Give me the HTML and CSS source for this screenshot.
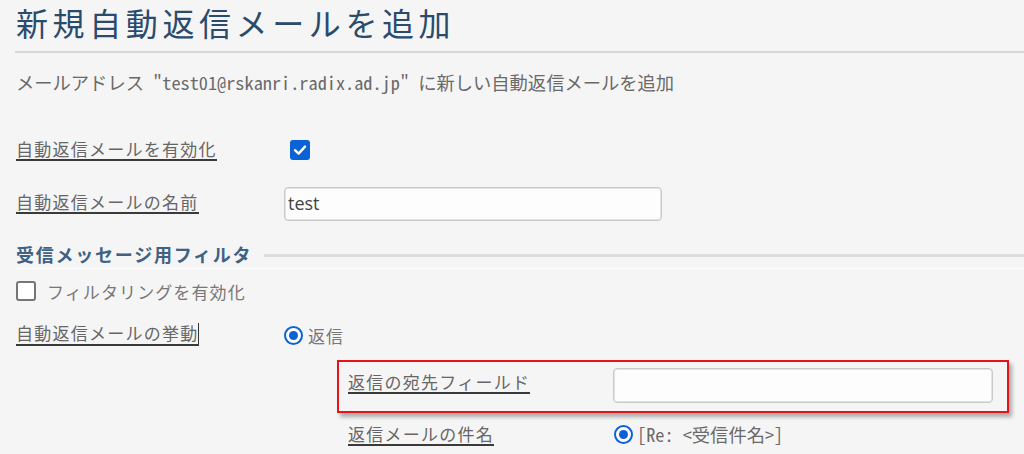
FILE: index.html
```html
<!DOCTYPE html>
<html lang="ja">
<head>
<meta charset="utf-8">
<title>新規自動返信メールを追加</title>
<link rel="stylesheet" href="styles.css">
</head>
<body>
<div class="page">
  <h1 class="title">新規自動返信メールを追加</h1>
  <div class="rule"></div>
  <p class="subtitle">メールアドレス "test01@rskanri.radix.ad.jp" に新しい自動返信メールを追加</p>

  <div class="row row-enable">
    <div class="label-col"><span class="label">自動返信メールを有効化</span></div>
    <div class="value-col">
      <span class="check checked">
        <svg viewBox="0 0 20 20" width="20" height="20"><path d="M5 10.2 L8.6 13.6 L15 6.6" fill="none" stroke="#fff" stroke-width="2.4" stroke-linecap="round" stroke-linejoin="round"/></svg>
      </span>
    </div>
  </div>

  <div class="row row-name">
    <div class="label-col"><span class="label">自動返信メールの名前</span></div>
    <div class="value-col"><div class="input input-name">test</div></div>
  </div>

  <div class="section">
    <h2 class="section-title">受信メッセージ用フィルタ</h2>
    <div class="section-line"></div>
  </div>

  <div class="row row-filter">
    <span class="check"></span>
    <span class="filter-text">フィルタリングを有効化</span>
  </div>

  <div class="row row-behavior">
    <div class="label-col"><span class="label">自動返信メールの挙動<span class="caret"></span></span></div>
    <div class="value-col">
      <span class="radio"><span class="dot"></span></span>
      <span class="radio-text">返信</span>
    </div>
  </div>

  <div class="highlight">
    <div class="sub-label-col"><span class="label">返信の宛先フィールド</span></div>
    <div class="input input-to"></div>
  </div>

  <div class="row row-subject">
    <div class="sub-label-col"><span class="label">返信メールの件名</span></div>
    <div class="subject-value">
      <span class="radio"><span class="dot"></span></span>
      <span class="mono-text">[Re: &lt;受信件名&gt;]</span>
    </div>
  </div>
</div>
</body>
</html>
```

FILE: styles.css
```css
html, body {
  margin: 0;
  padding: 0;
  background: #f5f5f5;
  overflow: hidden;
}
body {
  font-family: "Noto Sans CJK JP", "Noto Sans", sans-serif;
  color: #666;
}
.page {
  padding-left: 16px;
  width: 1008px;
  height: 454px;
  overflow: hidden;
}
.title {
  margin: 0;
  height: 44px;
  line-height: 44px;
  font-size: 32px;
  font-weight: 400;
  letter-spacing: 4.6px;
  color: #2b4b6d;
  white-space: nowrap;
}
.rule {
  margin-top: 7px;
  margin-left: -1px;
  height: 2px;
  background: #d8d8d8;
}
.subtitle {
  margin: 17px 0 0 0;
  height: 24px;
  line-height: 24px;
  font-family: "Noto Sans Mono CJK JP", "DejaVu Sans Mono", "Noto Sans CJK JP", monospace;
  font-size: 18.3px;
  color: #6a6a6a;
  white-space: nowrap;
}
.row {
  display: flex;
  align-items: center;
}
.label-col {
  width: 268px;
  flex: none;
}
.sub-label-col {
  width: 265px;
  flex: none;
}
.value-col {
  display: flex;
  align-items: center;
}
.label {
  display: inline-block;
  font-size: 17px;
  line-height: 20px;
  letter-spacing: 1.25px;
  color: #666;
  border-bottom: 2px solid #3a3a3a;
  white-space: nowrap;
}
.caret {
  display: inline-block;
  width: 1px;
  height: 21px;
  background: #333;
  vertical-align: -4px;
  margin-left: -1px;
}
.row-enable {
  margin-top: 35px;
  height: 40px;
}
.check {
  width: 16px;
  height: 16px;
  border: 2px solid #767676;
  border-radius: 3px;
  background: #fff;
  flex: none;
  display: inline-block;
}
.check.checked {
  width: 20px;
  height: 20px;
  border: none;
  background: #0b62d6;
  margin-left: 6px;
  margin-top: 2px;
}
.check.checked svg { display: block; }
.row-name {
  margin-top: 13px;
  height: 40px;
}
.input {
  box-sizing: border-box;
  background: #fdfdfd;
  border: 1px solid #c9c9c9;
  border-radius: 4px;
  box-shadow: inset 0 0 0 1px #e4e4e4;
}
.input-name {
  width: 378px;
  height: 34px;
  padding-left: 3px;
  line-height: 31px;
  font-family: "Open Sans", "Noto Sans", sans-serif;
  font-size: 18px;
  color: #444;
  margin-top: 3px;
}
.section {
  display: flex;
  align-items: center;
  margin-top: 18px;
  height: 28px;
  border-bottom: 1px solid #fff;
  margin-left: -1px;
}
.section-title {
  margin: 0 0 0 1px;
  font-size: 18px;
  font-weight: 700;
  letter-spacing: 1.75px;
  line-height: 28px;
  color: #3f6184;
  white-space: nowrap;
}
.section-line {
  flex: 1;
  height: 3px;
  background: #dcdcdc;
  margin-left: 12px;
  margin-top: 3px;
}
.row-filter {
  margin-top: 7px;
  height: 30px;
}
.filter-text {
  margin-left: 11px;
  font-size: 17px;
  letter-spacing: 1.1px;
  color: #777;
  white-space: nowrap;
}
.row-behavior {
  margin-top: 10px;
  height: 34px;
}
.radio {
  box-sizing: border-box;
  width: 19px;
  height: 19px;
  border: 2px solid #0b62d6;
  border-radius: 50%;
  background: #fff;
  display: inline-flex;
  align-items: center;
  justify-content: center;
  flex: none;
}
.dot {
  width: 9px;
  height: 9px;
  border-radius: 50%;
  background: #0b62d6;
}
.row-behavior .radio {
  margin-top: 5px;
}
.radio-text {
  margin-left: 5px;
  font-size: 17px;
  letter-spacing: 1px;
  color: #777;
  margin-top: 5px;
}
.highlight {
  display: flex;
  align-items: flex-start;
  box-sizing: border-box;
  margin-top: 10px;
  margin-left: 321px;
  width: 672px;
  height: 53px;
  border: 2px solid #e8131a;
  padding-left: 9px;
  box-shadow: 3px 4px 4px rgba(0, 0, 0, 0.3);
}
.highlight .label {
  margin-top: 10px;
}
.input-to {
  width: 380px;
  height: 35px;
  margin-top: 6px;
}
.row-subject {
  margin-left: 332px;
  margin-top: 10px;
  height: 22px;
}
.subject-value {
  display: flex;
  align-items: center;
  margin-left: 1px;
}
.mono-text {
  margin-left: 4px;
  font-family: "Noto Sans Mono CJK JP", "DejaVu Sans Mono", "Noto Sans CJK JP", monospace;
  font-size: 18.3px;
  color: #6a6a6a;
  white-space: nowrap;
}
```
